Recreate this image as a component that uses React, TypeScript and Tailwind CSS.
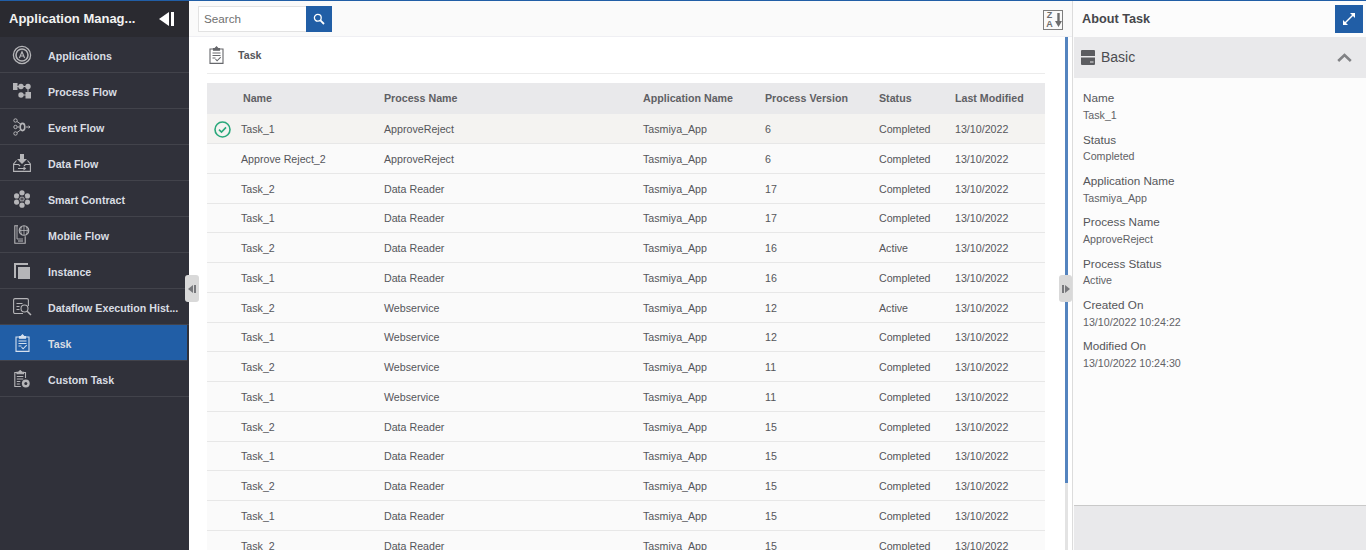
import type { ReactNode } from "react";

const font = "font-['Liberation_Sans',Arial,sans-serif]";

const stroke = {
  fill: "none",
  stroke: "currentColor",
  strokeWidth: 1.3,
};

function AppIcon() {
  return (
    <svg width="20" height="20" viewBox="0 0 20 20" {...stroke}>
      <circle cx="10" cy="10" r="8.6" />
      <circle cx="10" cy="10" r="6" strokeWidth="1.6" />
      <path d="M7.4 13 10 6.8 12.6 13M8.4 11h3.2" strokeWidth="1.2" />
    </svg>
  );
}

function ProcessIcon() {
  return (
    <svg width="18" height="16" viewBox="0 0 18 16" fill="currentColor">
      <rect x="0" y="0" width="4.5" height="7" />
      <circle cx="8" cy="3.5" r="2.7" />
      <circle cx="15" cy="3.5" r="2.7" />
      <circle cx="8" cy="12" r="2.7" />
      <rect x="12.5" y="9" width="5.5" height="6.5" />
      <path d="M4 3.5h2M10 3.5h3M15 6v3M10 12h3" stroke="currentColor" />
    </svg>
  );
}

function EventIcon() {
  return (
    <svg width="18" height="18" viewBox="0 0 18 18" {...stroke} strokeWidth="1">
      <circle cx="2.5" cy="2.5" r="1.7" />
      <circle cx="2.5" cy="9" r="1.7" />
      <circle cx="2.5" cy="15.5" r="1.7" />
      <path d="M4 3.5 7.5 6M4.5 9h2M4 14.5 7.5 12" />
      <ellipse cx="9.5" cy="9" rx="2.3" ry="3.6" strokeWidth="1.6" />
      <path d="M13 9h4M15.6 7.8 17 9l-1.4 1.2" />
    </svg>
  );
}

function DataIcon() {
  return (
    <svg width="18" height="18" viewBox="0 0 18 18" fill="currentColor">
      <path d="M7 0h4v5h3l-5 5-5-5h3z" />
      <path d="M3.5 6.5.6 10v7.4h16.8V10l-2.9-3.5" fill="none" stroke="currentColor" strokeWidth="1.1" />
      <path d="M.6 10.5h5l1.5 1.5M17.4 10.5h-5L11 12M5 14.5h6" fill="none" stroke="currentColor" strokeWidth="1.1" />
      <path d="m10.5 12.4 2.8 2.1-2.8 2.1z" />
    </svg>
  );
}

function SmartIcon() {
  const dots = [
    [9, 2.8],
    [3.6, 5.9],
    [14.4, 5.9],
    [3.6, 12.1],
    [14.4, 12.1],
    [9, 15.2],
    [9, 9],
  ];
  return (
    <svg width="18" height="18" viewBox="0 0 18 18" fill="currentColor">
      {dots.map(([cx, cy]) => (
        <circle key={`${cx}-${cy}`} cx={cx} cy={cy} r="2.6" />
      ))}
      <path d="M9 5.5v7M5.5 7 12.5 11M12.5 7 5.5 11" stroke="#30313a" strokeWidth=".7" />
    </svg>
  );
}

function MobileIcon() {
  return (
    <svg width="16" height="19" viewBox="0 0 16 19" {...stroke} strokeWidth="1.1">
      <path d="M4 .8H.8v17.4h10.4v-7" />
      <path d="M3 1v13h6" strokeWidth=".9" />
      <circle cx="10" cy="5.5" r="4.8" />
      <path d="M10 1v9M5.5 5.5h9M7.6 2.2c-1.2 2-1.2 4.6 0 6.6M12.4 2.2c1.2 2 1.2 4.6 0 6.6" strokeWidth=".8" />
      <path d="M4 16h5" />
    </svg>
  );
}

function InstanceIcon() {
  return (
    <svg width="16" height="16" viewBox="0 0 16 16" fill="currentColor">
      <path d="M0 0h14v2H2v13H0z" />
      <rect x="4" y="4" width="12" height="12" />
    </svg>
  );
}

function HistoryIcon() {
  return (
    <svg width="19" height="18" viewBox="0 0 19 18" {...stroke} strokeWidth="1.1">
      <path d="M10 15.5H2A1.4 1.4 0 0 1 .6 14.1V2A1.4 1.4 0 0 1 2 .6h12A1.4 1.4 0 0 1 15.4 2v6" />
      <path d="M3.5 5.5h6M3.5 8.5h3M3.5 11.5h3" />
      <circle cx="11.5" cy="10.5" r="3.5" />
      <path d="m14.2 13.2 3.8 3.8" strokeWidth="1.5" />
    </svg>
  );
}

function TaskIcon({ size = 15 }: { size?: number }) {
  return (
    <svg width={size} height={size * 1.2} viewBox="0 0 15 18" {...stroke} strokeWidth="1.1">
      <path d="M4.5 3H1v14.4h13V3h-3.5" />
      <path d="M4.5 4.2h6V2.6H9.2L7.5.8 5.8 2.6H4.5z" fill="currentColor" />
      <path d="M3.5 7h8M3.5 9.5h8M3.5 12h3" />
      <path d="m6.5 13.2 1.6 1.6 3.6-3.6" />
    </svg>
  );
}

function CustomTaskIcon() {
  return (
    <svg width="16" height="18" viewBox="0 0 16 18" {...stroke} strokeWidth="1.1">
      <path d="M3.5 2.5H.8v14h6M9 2.5h2.5V8" />
      <path d="M3 3.7h6.5V2.2H8L6.2.6 4.5 2.2H3z" fill="currentColor" />
      <path d="M2.8 6.5h6.5M2.8 9h6.5M2.8 11.5h3.5M2.8 14h3" />
      <circle cx="11.8" cy="13.5" r="3.9" fill="currentColor" stroke="none" />
      <circle cx="11.8" cy="13.5" r="1.5" fill="#30313a" stroke="none" />
    </svg>
  );
}

const navItems: { label: string; icon: ReactNode; active?: boolean }[] = [
  { label: "Applications", icon: <AppIcon /> },
  { label: "Process Flow", icon: <ProcessIcon /> },
  { label: "Event Flow", icon: <EventIcon /> },
  { label: "Data Flow", icon: <DataIcon /> },
  { label: "Smart Contract", icon: <SmartIcon /> },
  { label: "Mobile Flow", icon: <MobileIcon /> },
  { label: "Instance", icon: <InstanceIcon /> },
  { label: "Dataflow Execution Hist...", icon: <HistoryIcon /> },
  { label: "Task", icon: <TaskIcon />, active: true },
  { label: "Custom Task", icon: <CustomTaskIcon /> },
];

const rows = [
  ["Task_1", "ApproveReject", "6", "Completed"],
  ["Approve Reject_2", "ApproveReject", "6", "Completed"],
  ["Task_2", "Data Reader", "17", "Completed"],
  ["Task_1", "Data Reader", "17", "Completed"],
  ["Task_2", "Data Reader", "16", "Active"],
  ["Task_1", "Data Reader", "16", "Completed"],
  ["Task_2", "Webservice", "12", "Active"],
  ["Task_1", "Webservice", "12", "Completed"],
  ["Task_2", "Webservice", "11", "Completed"],
  ["Task_1", "Webservice", "11", "Completed"],
  ["Task_2", "Data Reader", "15", "Completed"],
  ["Task_1", "Data Reader", "15", "Completed"],
  ["Task_2", "Data Reader", "15", "Completed"],
  ["Task_1", "Data Reader", "15", "Completed"],
  ["Task_2", "Data Reader", "15", "Completed"],
];

const details = [
  ["Name", "Task_1"],
  ["Status", "Completed"],
  ["Application Name", "Tasmiya_App"],
  ["Process Name", "ApproveReject"],
  ["Process Status", "Active"],
  ["Created On", "13/10/2022 10:24:22"],
  ["Modified On", "13/10/2022 10:24:30"],
];

const gridCols = "grid grid-cols-[177px_259px_122px_114px_76px_90px]";

function Sidebar() {
  return (
    <aside className="flex w-[189px] shrink-0 flex-col bg-[#30313a]">
      <div className="flex h-[36px] shrink-0 items-center justify-between bg-[#2a2a30] pl-[9px] pr-[15px]">
        <span className="text-[13px] font-bold text-[#f2f2f2]">Application Manag...</span>
        <svg width="15" height="15" viewBox="0 0 15 15" fill="#fff">
          <path d="M10 0v14L0 7z" />
          <rect x="12" y="0" width="3" height="14" />
        </svg>
      </div>
      <nav className="flex flex-col">
        {navItems.map((item) => (
          <div
            key={item.label}
            className={`flex h-[36px] items-center border-b border-[#42434b] ${
              item.active ? "mr-[2px] bg-[#215ea6] text-[#d5e0ee]" : "text-[#b5b5b8]"
            }`}
          >
            <span className="flex w-[48px] shrink-0 items-center justify-center pr-[4px]">{item.icon}</span>
            <span className="pt-[2px] text-[10.67px] font-bold text-[#d9dde3]">{item.label}</span>
          </div>
        ))}
      </nav>
    </aside>
  );
}

function TaskTable() {
  return (
    <div className="mx-[18px] mt-[9px] w-[838px] text-[10.67px] text-[#55565a]">
      <div className={`${gridCols} h-[31.3px] items-center bg-[#e9e9eb] pb-[2px] font-bold text-[#5f6064]`}>
        <span className="pl-[36px]">Name</span>
        <span>Process Name</span>
        <span>Application Name</span>
        <span>Process Version</span>
        <span>Status</span>
        <span>Last Modified</span>
      </div>
      {rows.map((row, i) => (
        <div
          key={i}
          className={`${gridCols} h-[29.75px] items-center border-b border-[#e7e7e7] pt-[1px] ${
            i === 0 ? "bg-[#f4f3f1]" : "bg-[#fafafa]"
          }`}
        >
          <span className="flex items-center">
            <span className="flex w-[34px] justify-center pr-[4px]">
              {i === 0 && (
                <svg width="17" height="17" viewBox="0 0 17 17" fill="none" stroke="#2aa87b" strokeWidth="1.6">
                  <circle cx="8.5" cy="8.5" r="7.5" />
                  <path d="m5 8.7 2.5 2.4L12 6.4" />
                </svg>
              )}
            </span>
            {row[0]}
          </span>
          <span>{row[1]}</span>
          <span>Tasmiya_App</span>
          <span>{row[2]}</span>
          <span>{row[3]}</span>
          <span>13/10/2022</span>
        </div>
      ))}
    </div>
  );
}

function MainPane() {
  return (
    <main className="relative flex min-w-0 flex-1 flex-col bg-white">
      <div className="flex h-[36px] shrink-0 items-center justify-between border-b border-[#efeff3] bg-[#fafafa] pl-[9px] pr-[9px]">
        <div className="flex h-[26px] w-[134px] border border-[#e2e2e2] bg-white">
          <span className="flex-1 pl-[5px] text-[11.7px] leading-[24px] text-[#707070]">Search</span>
          <span className="-my-px -mr-px flex w-[26px] items-center justify-center bg-[#215ea6]">
            <svg width="12" height="12" viewBox="0 0 12 12" fill="none" stroke="#fff" strokeWidth="1.3">
              <circle cx="4.8" cy="4.8" r="3.4" />
              <path d="m7.4 7.4 3.6 3.6" strokeWidth="1.8" />
            </svg>
          </span>
        </div>
        <div className="mt-[2px] flex h-[20px] w-[20px] items-center border border-[#7e7e7e] text-[#6d6d6d]">
          <span className="flex w-[11px] flex-col items-center text-[9px] font-bold leading-[8.5px]">
            <span>Z</span>
            <span>A</span>
          </span>
          <svg width="7" height="14" viewBox="0 0 7 14" fill="currentColor">
            <path d="M2.3 0h2.4v8H7l-3.5 6L0 8h2.3z" />
          </svg>
        </div>
      </div>
      <div className="flex min-h-0 flex-1 overflow-hidden">
        <div className="min-w-0 flex-1">
          <div className="mx-[18px] flex h-[37px] w-[838px] items-center border-b border-[#ececec] pl-[2px]">
            <span className="text-[#66676b]">
              <TaskIcon size={15} />
            </span>
            <span className="ml-[14px] text-[10.67px] font-bold text-[#55565a]">Task</span>
          </div>
          <TaskTable />
        </div>
        <div className="mr-[4px] w-[3px] shrink-0 bg-[#e3e3e3]">
          <div className="h-[446px] bg-[#5484bf]" />
        </div>
      </div>
      <button className="absolute left-[-4px] top-[274px] flex h-[27px] w-[14px] items-center justify-center rounded-[3px] bg-[#d9d9d9]">
        <svg width="8" height="8" viewBox="0 0 8 8" fill="#77787c">
          <path d="M5 0v8L0 4z" />
          <rect x="6" width="2" height="8" />
        </svg>
      </button>
      <button className="absolute right-0 top-[274px] flex h-[27px] w-[13px] items-center justify-center rounded-[3px] bg-[#d9d9d9]">
        <svg width="8" height="8" viewBox="0 0 8 8" fill="#77787c">
          <rect width="2" height="8" />
          <path d="M3 0v8l5-4z" />
        </svg>
      </button>
    </main>
  );
}

function AboutPane() {
  return (
    <aside className="flex w-[294px] shrink-0 flex-col border-l border-[#dcdcdc] bg-[#fcfcfc] pl-px">
      <div className="flex h-[36px] shrink-0 items-center justify-between pl-[8px] pr-[3px]">
        <span className="pt-[1px] text-[12.7px] font-bold text-[#46474b]">About Task</span>
        <span className="flex h-[28px] w-[28px] items-center justify-center bg-[#215ea6]">
          <svg width="14" height="14" viewBox="0 0 14 14" fill="none" stroke="#fff" strokeWidth="1.5">
            <path d="M2.5 11.5 11.5 2.5" />
            <path d="M8 1h5v5z" fill="#fff" stroke="none" />
            <path d="M1 8v5h5z" fill="#fff" stroke="none" />
          </svg>
        </span>
      </div>
      <div className="flex h-[41px] shrink-0 items-center justify-between bg-[#e9e9eb] pl-[7px] pr-[14px]">
        <div className="flex items-center gap-[6px]">
          <svg width="14" height="15" viewBox="0 0 14 15" fill="#5c5d61">
            <path d="M0 1a1 1 0 0 1 1-1h12a1 1 0 0 1 1 1v5H0z" />
            <path d="M0 7.5h14V14a1 1 0 0 1-1 1H1a1 1 0 0 1-1-1zM9 11.5v1h3.5v-1z" fillRule="evenodd" />
          </svg>
          <span className="text-[14px] text-[#4b4c50]">Basic</span>
        </div>
        <svg width="15" height="9" viewBox="0 0 15 9" fill="none" stroke="#818285" strokeWidth="2.6">
          <path d="m1.2 8 6.3-6 6.3 6" />
        </svg>
      </div>
      <div className="flex-1 pl-[9px] pt-[11.4px]">
        {details.map(([label, value]) => (
          <div key={label} className="h-[41.35px]">
            <div className="text-[11.7px] leading-[17px] text-[#55565a]">{label}</div>
            <div className="pt-[0.5px] text-[10.67px] leading-[17px] text-[#616266]">{value}</div>
          </div>
        ))}
      </div>
      <div className="h-[45px] shrink-0 border-t border-[#c9c9c9] bg-[#e9e9eb]" />
    </aside>
  );
}

export default function App() {
  return (
    <div className={`flex h-[550px] w-[1366px] flex-col overflow-hidden bg-white ${font}`}>
      <div className="h-px shrink-0 bg-[#215ea6]" />
      <div className="flex min-h-0 flex-1">
        <Sidebar />
        <MainPane />
        <AboutPane />
      </div>
    </div>
  );
}
